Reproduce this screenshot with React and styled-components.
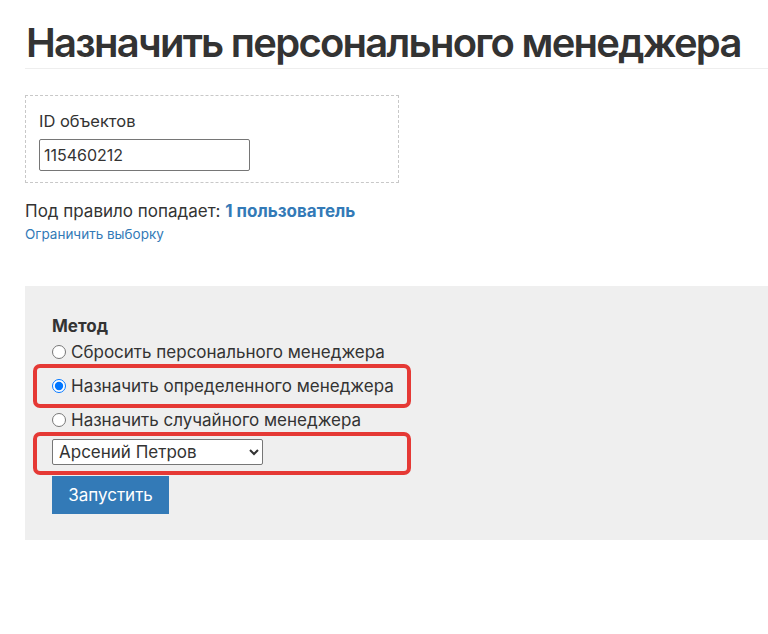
import { useState } from 'react';
import styled, { createGlobalStyle } from 'styled-components';

const GlobalStyle = createGlobalStyle`
  html, body {
    margin: 0;
    padding: 0;
    background: #fff;
  }
  body {
    font-family: Inter, "Noto Sans", "DejaVu Sans", sans-serif;
    color: #333;
    overflow: hidden;
  }
`;

const Page = styled.div`
  padding: 0 0 0 25px;
  width: 743px;
`;

const Title = styled.h1`
  margin: 0;
  padding: 18px 0 0 1px;
  font-size: 40px;
  font-weight: 600;
  line-height: 50px;
  letter-spacing: -1.75px;
  white-space: nowrap;
  color: #333;
  border-bottom: 1px solid #eee;
  height: 50px;
`;

const FilterBox = styled.div`
  margin-top: 26px;
  width: 374px;
  box-sizing: border-box;
  border: 1px dashed #c8c8c8;
  padding: 15px 13px 11px;
`;

const Label = styled.div`
  font-size: 16.5px;
  line-height: 20px;
  color: #333;
  margin-bottom: 8px;
`;

const TextInput = styled.input`
  box-sizing: border-box;
  width: 211px;
  height: 32px;
  border: 1px solid #767676;
  border-radius: 2px;
  padding: 0 4px;
  font-family: inherit;
  font-size: 16px;
  color: #333;
  background: #fff;
`;

const Summary = styled.div`
  margin-top: 18px;
  font-size: 17px;
  line-height: 20px;
  color: #333;
`;

const Strong = styled.b`
  color: #337ab7;
  font-weight: 700;
`;

const SmallLink = styled.a`
  display: block;
  font-size: 13.5px;
  line-height: 16px;
  color: #337ab7;
  text-decoration: none;
  margin-top: 5px;
`;

const Panel = styled.div`
  margin-top: 44px;
  background: #efefef;
  height: 254px;
  box-sizing: border-box;
  padding: 30px 0 0 27px;
  width: 743px;
`;

const FieldTitle = styled.div`
  font-size: 17px;
  font-weight: 700;
  line-height: 20px;
  color: #333;
  margin-bottom: 4px;
`;

const RadioRow = styled.label`
  display: flex;
  align-items: center;
  gap: 5px;
  font-size: 17px;
  line-height: 20px;
  color: #333;
  height: 24px;
  input {
    margin: 0;
    width: 14px;
    height: 14px;
    accent-color: #0075ff;
  }
`;

const Highlight = styled.div`
  margin-left: -19px;
  width: 378px;
  box-sizing: border-box;
  border: 4px solid #e53935;
  border-radius: 7px;
  padding: ${(p) => p.$pad};
  padding-left: 15px;
`;

const Select = styled.select`
  display: block;
  width: 211px;
  height: 26px;
  box-sizing: border-box;
  border: 1px solid #767676;
  border-radius: 2px;
  background: #fff;
  font-family: inherit;
  font-size: 17px;
  color: #333;
  padding: 0 2px;
`;

const RunButton = styled.button`
  display: block;
  margin-top: 1px;
  width: 117px;
  height: 38px;
  border: 0;
  background: #337ab7;
  color: #fff;
  font-family: inherit;
  font-size: 17px;
  cursor: pointer;
`;

const methods = [
  { id: 'reset', label: 'Сбросить персонального менеджера' },
  { id: 'fixed', label: 'Назначить определенного менеджера' },
  { id: 'random', label: 'Назначить случайного менеджера' },
];

const App = () => {
  const [method, setMethod] = useState('fixed');
  const [ids, setIds] = useState('115460212');

  const renderRadio = (m) => (
    <RadioRow key={m.id}>
      <input
        type="radio"
        name="method"
        checked={method === m.id}
        onChange={() => setMethod(m.id)}
      />
      {m.label}
    </RadioRow>
  );

  return (
    <>
      <GlobalStyle />
      <Page>
        <Title>Назначить персонального менеджера</Title>
        <FilterBox>
          <Label>ID объектов</Label>
          <TextInput value={ids} onChange={(e) => setIds(e.target.value)} />
        </FilterBox>
        <Summary>
          Под правило попадает: <Strong>1 пользователь</Strong>
        </Summary>
        <SmallLink href="#">Ограничить выборку</SmallLink>
        <Panel>
          <FieldTitle>Метод</FieldTitle>
          {renderRadio(methods[0])}
          <Highlight $pad="6px 0">
            {renderRadio(methods[1])}
          </Highlight>
          {renderRadio(methods[2])}
          <Highlight $pad="3px 0 6px">
            <Select defaultValue="petrov">
              <option value="petrov">Арсений Петров</option>
            </Select>
          </Highlight>
          <RunButton type="button">Запустить</RunButton>
        </Panel>
      </Page>
    </>
  );
};

export default App;
